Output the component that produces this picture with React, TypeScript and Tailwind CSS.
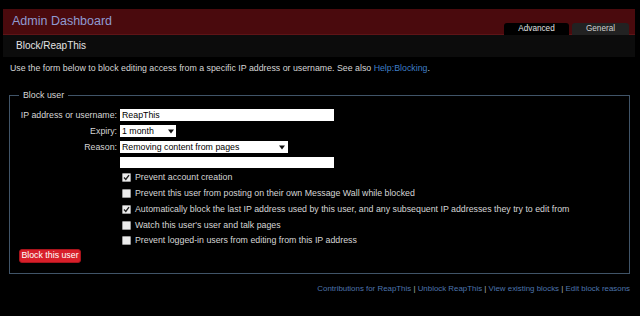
import React from "react";

const font = { fontFamily: '"Liberation Sans", Arial, sans-serif' };

function Arrow() {
  return (
    <svg width="6" height="5" viewBox="0 0 6 5" className="shrink-0">
      <path d="M0 0.5 L6 0.5 L3 4.5 Z" fill="#111" />
    </svg>
  );
}

function Check({ checked }: { checked: boolean }) {
  return (
    <span className="flex h-[9px] w-[9px] shrink-0 items-center justify-center rounded-[1px] border border-[#9a9a9a] bg-[#ececec]">
      {checked && (
        <svg width="7" height="7" viewBox="0 0 7 7">
          <path d="M1 3.6 L2.8 5.4 L6 1.2" stroke="#222" strokeWidth="1.4" fill="none" />
        </svg>
      )}
    </span>
  );
}

const options: [boolean, string][] = [
  [true, "Prevent account creation"],
  [false, "Prevent this user from posting on their own Message Wall while blocked"],
  [true, "Automatically block the last IP address used by this user, and any subsequent IP addresses they try to edit from"],
  [false, "Watch this user's user and talk pages"],
  [false, "Prevent logged-in users from editing from this IP address"],
];

export default function App() {
  return (
    <div className="h-[316px] w-[640px] overflow-hidden bg-black pt-[9px] text-[8.8px] leading-[11px] text-[#d6d6d6]" style={font}>
      <div className="mx-[3px] w-[632px]">
        <div className="flex h-[26px] items-end justify-between border-b border-[#5e1417] bg-[#4a0a0d] pl-[9px] pr-[6px]">
          <div className="self-center text-[12.5px] leading-[15px] text-[#8f9bd2]">Admin Dashboard</div>
          <div className="-mb-px flex gap-[3px]">
            <div className="flex h-[12px] w-[65px] items-center justify-center rounded-t-[3px] bg-black text-[8.2px] leading-[10px] text-[#e0e0e0]">Advanced</div>
            <div className="flex h-[12px] w-[57px] items-center justify-center rounded-t-[3px] bg-[#222222] text-[8.2px] leading-[10px] text-[#d0d0d0]">General</div>
          </div>
        </div>
        <div className="flex h-[22px] items-center bg-[#0c0c0c] pl-[13px] text-[10px] leading-[12px] text-[#e4e4e4]">Block/ReapThis</div>
      </div>

      <p className="ml-[10px] mt-[6px] whitespace-nowrap">
        Use the form below to block editing access from a specific IP address or username. See also{" "}
        <span className="text-[#3f7fc6]">Help:Blocking</span>.
      </p>

      <fieldset className="ml-[9px] mt-[16px] w-[621px] border border-[#405468] pb-[10px] pl-[9px] pr-[9px] pt-[8px]">
        <legend className="px-[4px] text-[8.8px] leading-[11px] text-[#d6d6d6]">Block user</legend>
        <div className="flex flex-col gap-[4px]">
          <div className="flex h-[12px] items-center gap-[3px]">
            <span className="w-[98px] shrink-0 whitespace-nowrap text-right">IP address or username:</span>
            <div className="flex h-[12px] w-[214px] items-center bg-white pl-[2px] text-black">ReapThis</div>
          </div>
          <div className="flex h-[12px] items-center gap-[3px]">
            <span className="w-[98px] shrink-0 text-right">Expiry:</span>
            <div className="flex h-[12px] w-[56px] items-center justify-between bg-white pl-[2px] pr-[2px] text-black">
              <span>1 month</span>
              <Arrow />
            </div>
          </div>
          <div className="flex h-[12px] items-center gap-[3px]">
            <span className="w-[98px] shrink-0 text-right">Reason:</span>
            <div className="flex h-[12px] w-[168px] items-center justify-between bg-white pl-[2px] pr-[3px] text-black">
              <span>Removing content from pages</span>
              <Arrow />
            </div>
          </div>
          <div className="-mt-px flex h-[12px] items-center gap-[3px]">
            <span className="w-[98px] shrink-0" />
            <div className="h-[11px] w-[214px] bg-white" />
          </div>
          {options.map(([c, t]) => (
            <div key={t} className="-mt-[0.25px] flex h-[12px] items-center">
              <span className="w-[103px] shrink-0" />
              <Check checked={c} />
              <span className="ml-[4px] whitespace-nowrap">{t}</span>
            </div>
          ))}
          <div className="-mt-[2px] flex">
            <button className="h-[14px] w-[62px] rounded-[3px] border border-[#a8141c] bg-[#d81f2a] text-[8.8px] leading-[11px] text-white">
              Block this user
            </button>
          </div>
        </div>
      </fieldset>

      <div className="mr-[10px] mt-[9px] whitespace-nowrap text-right text-[7.9px] leading-[11px] text-[#4d75ad]">
        Contributions for ReapThis <span className="text-[#b0b0b0]">|</span> Unblock ReapThis{" "}
        <span className="text-[#b0b0b0]">|</span> View existing blocks <span className="text-[#b0b0b0]">|</span> Edit block reasons
      </div>
    </div>
  );
}
